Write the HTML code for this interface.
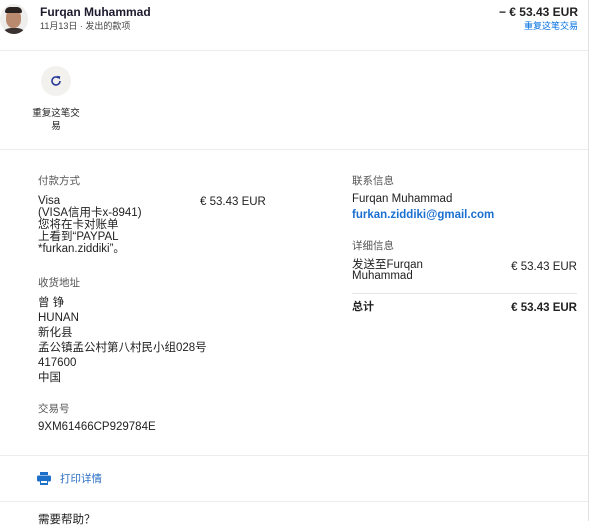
<!DOCTYPE html>
<html><head><meta charset="utf-8"><style>
*{margin:0;padding:0;box-sizing:border-box}
body{width:609px;height:521px;background:#fff;font-family:"Liberation Sans","Noto Sans CJK SC",sans-serif;color:#222;overflow:hidden;position:relative;font-size:11px}
.a{position:absolute;white-space:nowrap;line-height:12px}
.hr{position:absolute;left:0;width:588px;height:1px;background:#ececec}
.lbl{color:#555;font-size:10.5px}
.b{font-weight:bold}
.blue{color:#0070e0}
</style></head><body>
<div style="position:absolute;left:588px;top:0;width:1px;height:521px;background:#e2e2e2"></div>
<div style="position:absolute;left:0px;top:4px;width:28px;height:30px;border-radius:50%;background:#eeeeec;overflow:hidden">
 <div style="position:absolute;left:6px;top:5px;width:15px;height:19px;border-radius:45%;background:#b98a6e"></div>
 <div style="position:absolute;left:5px;top:3px;width:17px;height:6px;border-radius:8px 8px 2px 2px;background:#2a2220"></div>
 <div style="position:absolute;left:1px;top:24px;width:26px;height:10px;border-radius:10px 10px 0 0;background:#3a3230"></div>
</div>
<div class="a b" style="left:40px;top:6px;font-size:12px;color:#1d1a2e">Furqan Muhammad</div>
<div class="a" style="left:40px;top:20px;font-size:9px;color:#444">11月13日 · 发出的款项</div>
<div class="a b" style="right:31px;top:6px;font-size:12px">− € 53.43 EUR</div>
<div class="a blue" style="right:31px;top:20px;font-size:9px">重复这笔交易</div>
<div class="hr" style="top:50px"></div>
<div style="position:absolute;left:41px;top:66px;width:30px;height:30px;border-radius:50%;background:#f2f1ee"></div>
<svg style="position:absolute;left:49px;top:74px" width="14" height="14" viewBox="0 0 14 14"><path d="M11 7a4 4 0 1 1-1.3-3" fill="none" stroke="#2a3a9a" stroke-width="1.6"/><path d="M8 1.8l3.2 0.6-0.4 3.2z" fill="#2a3a9a"/></svg>
<div class="a" style="left:31px;top:107px;width:50px;text-align:center;white-space:normal;font-size:9.5px;line-height:13px">重复这笔交易</div>
<div class="hr" style="top:149px"></div>
<div class="a lbl" style="left:38px;top:175px">付款方式</div>
<div class="a" style="left:38px;top:195px;line-height:12px;font-size:11.5px">Visa<br>(VISA信用卡x-8941)<br>您将在卡对账单<br>上看到“PAYPAL<br>*furkan.ziddiki”。</div>
<div class="a" style="left:200px;top:196px;font-size:11.5px">€ 53.43 EUR</div>
<div class="a lbl" style="left:38px;top:277px">收货地址</div>
<div class="a" style="left:38px;top:296px;line-height:15px;font-size:11.5px">曾 铮<br>HUNAN<br>新化县<br>孟公镇孟公村第八村民小组028号<br>417600<br>中国</div>
<div class="a lbl" style="left:38px;top:403px">交易号</div>
<div class="a" style="left:38px;top:421px;font-size:11.5px">9XM61466CP929784E</div>
<div class="a lbl" style="left:352px;top:175px">联系信息</div>
<div class="a" style="left:352px;top:193px;font-size:11.5px">Furqan Muhammad</div>
<div class="a blue b" style="left:352px;top:209px;color:#1a6fd0;font-size:11.5px">furkan.ziddiki@gmail.com</div>
<div class="a lbl" style="left:352px;top:240px">详细信息</div>
<div class="a" style="left:352px;top:260px;line-height:11px;font-size:11.5px">发送至Furqan<br>Muhammad</div>
<div class="a" style="right:32px;top:261px;font-size:11.5px">€ 53.43 EUR</div>
<div style="position:absolute;left:352px;top:293px;width:225px;height:1px;background:#e6e6e6"></div>
<div class="a b" style="left:352px;top:301px">总计</div>
<div class="a b" style="right:32px;top:302px;font-size:11.5px">€ 53.43 EUR</div>
<div class="hr" style="top:455px"></div>
<svg style="position:absolute;left:37px;top:472px" width="14" height="13" viewBox="0 0 14 13"><rect x="3" y="0" width="8" height="3" fill="#1d6fc8"/><rect x="0" y="3.5" width="14" height="6" rx="1.5" fill="#1d6fc8"/><rect x="3" y="8" width="8" height="5" fill="#1d6fc8"/><rect x="4" y="9" width="6" height="2" fill="#fff"/></svg>
<div class="a blue" style="left:60px;top:473px;font-size:10.5px;color:#2a6fc4">打印详情</div>
<div class="hr" style="top:501px"></div>
<div class="a" style="left:38px;top:514px;font-size:11.5px">需要帮助？</div>
</body></html>
